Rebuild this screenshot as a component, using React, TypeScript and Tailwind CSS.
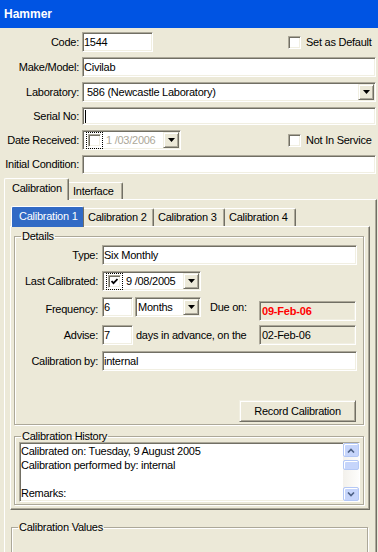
import React from "react";

const sunken =
  "border border-t-[#aca899] border-l-[#aca899] border-r-white border-b-white shadow-[inset_1px_1px_0_#716f64,inset_-1px_-1px_0_#f1efe2]";
const raised =
  "border border-t-[#f1efe2] border-l-[#f1efe2] border-r-[#716f64] border-b-[#716f64] shadow-[inset_1px_1px_0_#fff,inset_-1px_-1px_0_#aca899]";
const etched =
  "border border-[#aca899] shadow-[1px_1px_0_#fff,inset_1px_1px_0_#fff]";

const Field = ({
  className = "",
  children,
}: {
  className?: string;
  children?: React.ReactNode;
}) => (
  <div
    className={`${sunken} flex items-center whitespace-nowrap overflow-hidden pl-px ${className}`}
  >
    {children}
  </div>
);

const DropBtn = () => (
  <div
    className={`${raised} bg-[#ece9d8] w-[16px] h-[16px] ml-auto mr-px shrink-0 flex items-center justify-center`}
  >
    <svg width="7" height="4" viewBox="0 0 7 4">
      <path d="M0 0h7L3.5 4z" fill="#000" />
    </svg>
  </div>
);

const Check = ({ checked = false }: { checked?: boolean }) => (
  <div
    className={`${sunken} bg-white w-[13px] h-[13px] shrink-0 flex items-center justify-center`}
  >
    {checked && (
      <svg width="7" height="7" viewBox="0 0 7 7">
        <path d="M0.5 3 L2.5 5.2 L6.5 1" stroke="#000" strokeWidth="1.8" fill="none" />
      </svg>
    )}
  </div>
);

const FocusCheck = ({ checked = false }: { checked?: boolean }) => (
  <div className="border border-dotted border-black p-px ml-[2px]">
    <Check checked={checked} />
  </div>
);

const Row = ({
  label,
  className = "h-[20px]",
  children,
}: {
  label: string;
  className?: string;
  children: React.ReactNode;
}) => (
  <div className={`flex items-stretch ${className}`}>
    <span className="w-[79px] mr-[3px] shrink-0 text-right self-center whitespace-nowrap">
      {label}
    </span>
    {children}
  </div>
);

const DRow = ({
  label,
  className = "h-[20px] items-stretch",
  children,
}: {
  label: string;
  className?: string;
  children: React.ReactNode;
}) => (
  <div className={`flex ${className}`}>
    <span className="w-[83px] mr-[4px] shrink-0 text-right self-center whitespace-nowrap">
      {label}
    </span>
    {children}
  </div>
);

const ScrollBtn = ({ up }: { up?: boolean }) => (
  <div className="h-[14px] rounded-[2px] border border-[#b4c8f6] bg-[#c6d5fb] shadow-[inset_1px_1px_0_#fff] flex items-center justify-center">
    <svg width="8" height="5" viewBox="0 0 8 5">
      <path
        d={up ? "M1 4.5 L4 1.5 L7 4.5" : "M1 0.5 L4 3.5 L7 0.5"}
        stroke="#4d6185"
        strokeWidth="1.6"
        fill="none"
      />
    </svg>
  </div>
);

export default function App() {
  return (
    <div className="w-[378px] h-[552px] overflow-hidden bg-[#ece9d8] flex flex-col font-['Liberation_Sans',Arial,sans-serif] text-[11px] tracking-[-0.25px] text-black leading-[13px]">
      <div className="h-[28px] shrink-0 bg-[#0054e3] px-[4px] flex items-center text-white font-bold text-[12px] tracking-normal">
        Hammer
      </div>

      <div className="flex flex-col gap-[5px] pt-[4px] pr-[2px] shrink-0">
        <Row label="Code:">
          <Field className="w-[71px] bg-white">1544</Field>
          <div className="ml-auto w-[88px] flex items-center gap-[5px] whitespace-nowrap">
            <Check />
            <span>Set as Default</span>
          </div>
        </Row>
        <Row label="Make/Model:">
          <Field className="flex-1 bg-white">Civilab</Field>
        </Row>
        <Row label="Laboratory:">
          <Field className="flex-1 bg-white">
            <span className="pl-[3px]">586 (Newcastle Laboratory)</span>
            <DropBtn />
          </Field>
        </Row>
        <Row label="Serial No:" className="h-[18px]">
          <Field className="flex-1 bg-white">
            <span className="w-px h-[13px] bg-black ml-px" />
          </Field>
        </Row>
        <Row label="Date Received:">
          <Field className="w-[99px] bg-white">
            <FocusCheck />
            <span className="ml-[3px] text-[#aca899]">1 /03/2006</span>
            <DropBtn />
          </Field>
          <div className="ml-auto w-[88px] flex items-center gap-[5px] whitespace-nowrap">
            <Check />
            <span>Not In Service</span>
          </div>
        </Row>
        <Row label="Initial Condition:" className="h-[19px]">
          <Field className="flex-1 bg-white" />
        </Row>
      </div>

      {/* outer tabs */}
      <div className="flex items-end pl-[4px] mt-[4px] h-[21px] shrink-0 relative z-10">
        <div className="h-[22px] -mb-px w-[65px] pl-[7px] pt-[3px] bg-[#ece9d8] border-t border-l border-white border-r border-r-[#716f64] shadow-[inset_-1px_0_0_#aca899] rounded-t-[2px]">
          Calibration
        </div>
        <div className="h-[17px] w-[54px] pl-[4px] pt-[2px] border-t border-white border-r border-r-[#716f64] shadow-[inset_-1px_0_0_#aca899] rounded-tr-[2px]">
          Interface
        </div>
      </div>

      <div className="flex-1 ml-[4px] mr-px border-t border-l border-white border-r border-r-[#716f64] shadow-[inset_-1px_0_0_#aca899] pt-[6px] pl-[5px] pr-[6px] flex flex-col">
        {/* inner tabs */}
        <div className="flex items-end pl-px h-[20px] shrink-0 relative z-10">
          <div className="h-[21px] -mb-px w-[73px] pl-[7px] pt-[3px] bg-[#316ac5] text-white border-t border-l border-white border-r border-r-[#716f64] rounded-t-[2px] whitespace-nowrap">
            Calibration 1
          </div>
          {["Calibration 2", "Calibration 3", "Calibration 4"].map((t, i) => (
            <div
              key={t}
              className={`h-[18px] pl-[4px] pt-[2px] border-t border-white border-r border-r-[#716f64] shadow-[inset_-1px_0_0_#aca899] rounded-tr-[2px] whitespace-nowrap ${
                i === 0 ? "w-[70px]" : "w-[71px]"
              }`}
            >
              {t}
            </div>
          ))}
        </div>

        <div className="shrink-0 border-t border-l border-white border-r border-b border-r-[#716f64] border-b-[#716f64] shadow-[inset_-1px_-1px_0_#aca899] pt-[3px] pl-[3px] pr-[5px] pb-[4px] flex flex-col">
          <fieldset className={`${etched}`}>
            <legend className="ml-[6px] px-px leading-[12px]">Details</legend>
            <div className="flex flex-col pt-[3px] pr-[6px] pb-[2px]">
              <DRow label="Type:">
                <Field className="flex-1 bg-white">Six Monthly</Field>
              </DRow>
              <DRow label="Last Calibrated:" className="h-[20px] items-stretch mt-[6px]">
                <Field className="w-[99px] bg-white">
                  <FocusCheck checked />
                  <span className="ml-[3px]">9 /08/2005</span>
                  <DropBtn />
                </Field>
              </DRow>
              <DRow label="Frequency:" className="h-[24px] items-start mt-[6px]">
                <Field className="w-[31px] h-[20px] bg-white">6</Field>
                <Field className="w-[66px] h-[20px] ml-[2px] bg-white">
                  <span className="pl-px">Months</span>
                  <DropBtn />
                </Field>
                <span className="ml-[9px] mt-[4px]">Due on:</span>
                <Field className="ml-auto mr-px mt-[4px] w-[97px] h-[20px] bg-[#ece9d8]">
                  <span className="font-bold text-[#ff0000] tracking-[-0.2px] pl-px">
                    09-Feb-06
                  </span>
                </Field>
              </DRow>
              <DRow label="Advise:" className="h-[20px] items-stretch mt-[4px]">
                <Field className="w-[31px] bg-white">7</Field>
                <span className="ml-[3px] self-center whitespace-nowrap">days in advance, on the</span>
                <Field className="ml-auto mr-px w-[97px] bg-[#ece9d8]">
                  <span className="pl-px">02-Feb-06</span>
                </Field>
              </DRow>
              <DRow label="Calibration by:" className="h-[20px] items-stretch mt-[6px]">
                <Field className="flex-1 bg-white">internal</Field>
              </DRow>
              <div className="flex justify-end mt-[29px]">
                <div
                  className={`${raised} bg-[#ece9d8] w-[117px] h-[22px] mr-px flex items-center justify-center whitespace-nowrap`}
                >
                  Record Calibration
                </div>
              </div>
            </div>
          </fieldset>

          <fieldset className={`${etched} mt-[5px]`}>
            <legend className="ml-[6px] px-px leading-[12px]">
              Calibration History
            </legend>
            <div className="pl-[4px] pr-[3px] pb-[2px]">
              <div className={`${sunken} bg-white h-[60px] flex`}>
                <div className="flex-1 pl-[1px] pt-px leading-[14px] whitespace-nowrap overflow-hidden">
                  <div>Calibrated on: Tuesday, 9 August 2005</div>
                  <div>Calibration performed by: internal</div>
                  <div>&nbsp;</div>
                  <div>Remarks:</div>
                </div>
                <div className="w-[16px] bg-gradient-to-r from-[#f3f1ec] to-[#fdfdfb] flex flex-col">
                  <ScrollBtn up />
                  <div className="mt-[3px] h-[10px] rounded-[2px] border border-[#b4c8f6] bg-[#c6d5fb] shadow-[inset_1px_1px_0_#fff]" />
                  <div className="flex-1" />
                  <ScrollBtn />
                </div>
              </div>
            </div>
          </fieldset>
        </div>

        <fieldset className={`${etched} mt-[11px] ml-px mr-[2px] h-[60px] shrink-0`}>
          <legend className="ml-[6px] px-px leading-[12px]">
            Calibration Values
          </legend>
        </fieldset>
      </div>
    </div>
  );
}
